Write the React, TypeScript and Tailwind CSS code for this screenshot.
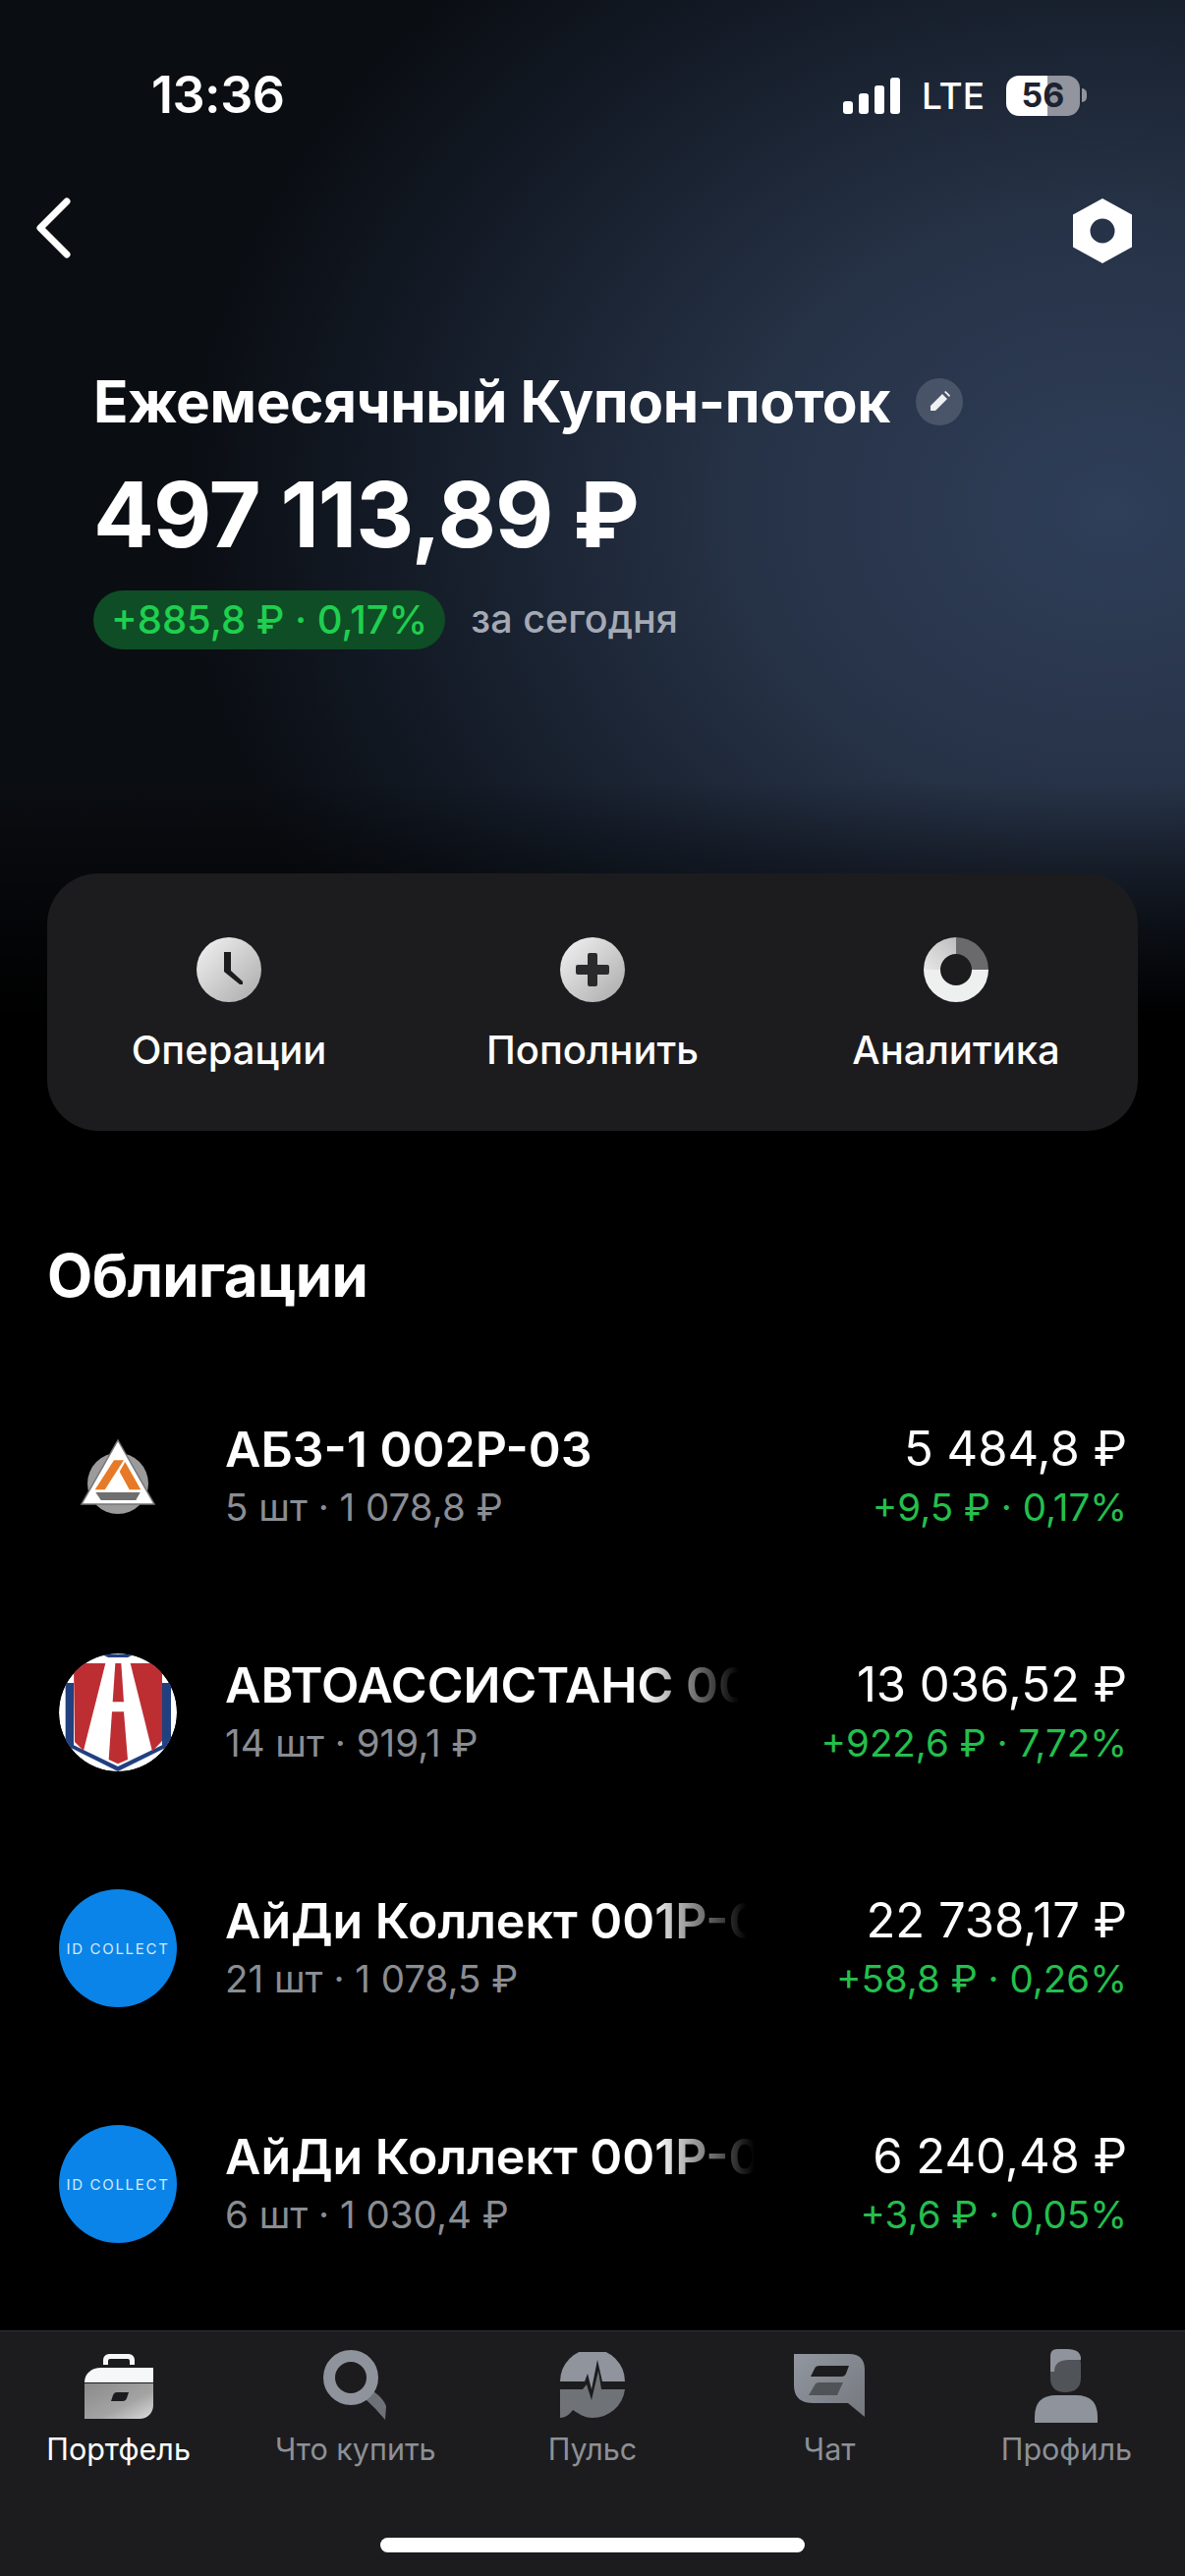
import type { ReactNode } from "react"

const font = { fontFamily: "Inter, 'Noto Sans', sans-serif" }

function StatusBar() {
    return (
        <div className="flex h-[72px] items-center justify-between pl-[154px] pr-[100px] text-white">
            <span className="text-[52px] font-semibold leading-none tracking-[-0.5px]">13:36</span>
            <div className="flex items-center">
                <div className="flex items-end gap-[6px]">
                    <div className="h-[13px] w-[10px] rounded-[3px] bg-white" />
                    <div className="h-[21px] w-[10px] rounded-[3px] bg-white" />
                    <div className="h-[29px] w-[10px] rounded-[3px] bg-white" />
                    <div className="h-[37px] w-[10px] rounded-[3px] bg-white" />
                </div>
                <span className="ml-[22px] text-[37px] font-medium leading-none">LTE</span>
                <div className="ml-[22px] flex h-[41px] w-[75px] items-center justify-center rounded-[13px] bg-[linear-gradient(90deg,#fff_56%,#92959d_56%)] text-[34px] font-bold leading-none text-[#1c2230]">
                    56
                </div>
                <div className="ml-[2px] h-[14px] w-[5px] rounded-r-full bg-[#92959d]" />
            </div>
        </div>
    )
}

function ClockIcon() {
    return (
        <svg width="66" height="66" viewBox="0 0 66 66">
            <defs>
                <linearGradient id="clockFill" x1="0" y1="0" x2="1" y2="1">
                    <stop offset="0" stopColor="#f4f4f4" />
                    <stop offset="1" stopColor="#a9a9a9" />
                </linearGradient>
            </defs>
            <circle cx="33" cy="33" r="33" fill="url(#clockFill)" />
            <path d="M28 15h7v19l12 11v3l-3 0-16-13z" fill="#1c1c1e" />
        </svg>
    )
}

function PlusIcon() {
    return (
        <svg width="66" height="66" viewBox="0 0 66 66">
            <defs>
                <linearGradient id="plusFill" x1="0" y1="0" x2="1" y2="1">
                    <stop offset="0" stopColor="#f4f4f4" />
                    <stop offset="1" stopColor="#a9a9a9" />
                </linearGradient>
            </defs>
            <circle cx="33" cy="33" r="33" fill="url(#plusFill)" />
            <path d="M28 18a2 2 0 0 1 2-2h6a2 2 0 0 1 2 2v10h10a2 2 0 0 1 2 2v6a2 2 0 0 1-2 2H38v10a2 2 0 0 1-2 2h-6a2 2 0 0 1-2-2V38H18a2 2 0 0 1-2-2v-6a2 2 0 0 1 2-2h10z" fill="#2a2a2c" />
        </svg>
    )
}

function DonutIcon() {
    return (
        <svg width="66" height="66" viewBox="0 0 66 66">
            <defs>
                <linearGradient id="donutFill" x1="0" y1="1" x2="1" y2="0">
                    <stop offset="0" stopColor="#e8e8e8" />
                    <stop offset="1" stopColor="#bdbdbd" />
                </linearGradient>
            </defs>
            <path d="M0 33a33 33 0 0 1 33-33v17a16 16 0 0 0-16 16z" fill="url(#donutFill)" />
            <path d="M33 0a33 33 0 0 1 33 33H49a16 16 0 0 0-16-16z" fill="#6a6a6c" />
            <path d="M0 33h17a16 16 0 0 0 32 0h17a33 33 0 0 1-66 0z" fill="#eef0f0" />
        </svg>
    )
}

function BriefcaseIcon() {
    return (
        <svg width="72" height="68" viewBox="0 0 72 68">
            <defs>
                <linearGradient id="caseFill" x1="0" y1="0" x2="1" y2="1">
                    <stop offset="0" stopColor="#8a8a8a" />
                    <stop offset="0.6" stopColor="#a4a4a4" />
                    <stop offset="1" stopColor="#dcdcdc" />
                </linearGradient>
            </defs>
            <path d="M20 13V8a6 6 0 0 1 6-6h20a6 6 0 0 1 6 6v5h-5V9a2 2 0 0 0-2-2H27a2 2 0 0 0-2 2v4z" fill="#f6f7f8" />
            <path d="M1 31C1 22 8 16 18 16h53v15z" fill="#f6f7f8" />
            <path d="M1 32h70v22c0 8-6 14-14 14H1z" fill="url(#caseFill)" />
            <path d="M30 44q1-3 4-3h12l-2 6q-1 3-4 3H28z" fill="#1c1c1e" />
        </svg>
    )
}

function SearchIcon() {
    return (
        <svg width="66" height="72" viewBox="0 0 66 72">
            <path d="M43 50l8-8q10 7 13 15l-1 14q-10-12-20-21z" fill="#6e7278" />
            <circle cx="28" cy="28" r="22" fill="none" stroke="#8f939c" strokeWidth="12" />
        </svg>
    )
}

function PulseIcon() {
    return (
        <svg width="68" height="68" viewBox="0 0 68 68">
            <path d="M1 30a33 33 0 0 1 66 0H44l-5-22-6 30-4-16-3 8z" fill="#90949d" />
            <path d="M1 38h23l4-5 5 16 7-30 3 19h24a33 33 0 0 1-33 29c-9 0-15-5-20-8-3 4-7 8-13 8z" fill="#6f7277" />
        </svg>
    )
}

function ChatIcon() {
    return (
        <svg width="72" height="66" viewBox="0 0 72 66">
            <defs>
                <linearGradient id="chatFill" x1="0" y1="0" x2="1" y2="1">
                    <stop offset="0" stopColor="#9297a0" />
                    <stop offset="1" stopColor="#74777d" />
                </linearGradient>
            </defs>
            <path d="M0 1h56q16 0 16 16v48L55 51H20Q0 51 0 33z" fill="url(#chatFill)" />
            <path d="M21 16q1-3 5-3h30l-3 8q-1 3-5 3H17z" fill="#1c1c1e" />
            <path d="M21 33q1-3 5-3h24l-6 13H15z" fill="#505358" />
        </svg>
    )
}

function ProfileIcon() {
    return (
        <svg width="64" height="76" viewBox="0 0 64 76">
            <path d="M16 16q0-15 15-15 16 0 16 15v14q0 15-16 15-15 0-15-15z" fill="#505358" />
            <path d="M16 24V8q0-7 7-7h10q14 0 14 10v1q-2 0-12 0-15 0-15 12z" fill="#8f939c" />
            <path d="M0 76V70q0-22 22-22h20q22 0 22 22v6z" fill="#8f939c" />
        </svg>
    )
}

function AbzLogo() {
    return (
        <svg width="120" height="120" viewBox="0 0 120 120">
            <circle cx="60" cy="67" r="31" fill="#9b9b9b" />
            <path d="M60 23l37 65H23z" fill="#fff" stroke="#777" strokeWidth="1.5" />
            <path d="M36.7 73.3L56 43.3h10L46.7 73.3z" fill="#e67a26" />
            <path d="M67.3 45l16 28.3H71.7L61.7 55z" fill="#e67a26" />
            <path d="M37.3 76h45.4l-4.4 8H42.7z" fill="#6f6f6f" />
        </svg>
    )
}

function AutoLogo() {
    return (
        <svg width="120" height="120" viewBox="0 0 360 360" className="rounded-full">
            <circle cx="180" cy="180" r="180" fill="#fff" />
            <path d="M20 90h25v190l135 65 135-65V90h27v190L180 360 20 280z" fill="#21407f" />
            <path d="M130 2h100l-20 10h-60z" fill="#21407f" />
            <path d="M45 30h97L75 297 48 270z" fill="#bd2e33" />
            <path d="M218 30h97v237l-30 32z" fill="#bd2e33" />
            <path d="M172 30h18l8 118h-34z" fill="#bd2e33" />
            <path d="M162 178h36l12 146-30 13-28-13z" fill="#bd2e33" />
        </svg>
    )
}

function IdCollectLogo() {
    return (
        <div className="flex size-[120px] items-center justify-center rounded-full bg-[#0a84e8] text-[15px] leading-none tracking-[1.7px] text-[#d5e9fb]">
            ID COLLECT
        </div>
    )
}

const bonds: { logo: ReactNode; name: string; nameWidth: string; sub: string; total: string; change: string }[] = [
    { logo: <AbzLogo />, name: "АБЗ-1 002Р-03", nameWidth: "w-[523px]", sub: "5 шт · 1 078,8 ₽", total: "5 484,8 ₽", change: "+9,5 ₽ · 0,17%" },
    { logo: <AutoLogo />, name: "АВТОАССИСТАНС 001Р-01", nameWidth: "w-[523px]", sub: "14 шт · 919,1 ₽", total: "13 036,52 ₽", change: "+922,6 ₽ · 7,72%" },
    { logo: <IdCollectLogo />, name: "АйДи Коллект 001Р-04", nameWidth: "w-[531px]", sub: "21 шт · 1 078,5 ₽", total: "22 738,17 ₽", change: "+58,8 ₽ · 0,26%" },
    { logo: <IdCollectLogo />, name: "АйДи Коллект 001Р-03", nameWidth: "w-[539px]", sub: "6 шт · 1 030,4 ₽", total: "6 240,48 ₽", change: "+3,6 ₽ · 0,05%" },
]

const actions = [
    { icon: <ClockIcon />, label: "Операции" },
    { icon: <PlusIcon />, label: "Пополнить" },
    { icon: <DonutIcon />, label: "Аналитика" },
]

const tabs = [
    { icon: <BriefcaseIcon />, label: "Портфель", active: true },
    { icon: <SearchIcon />, label: "Что купить", active: false },
    { icon: <PulseIcon />, label: "Пульс", active: false },
    { icon: <ChatIcon />, label: "Чат", active: false },
    { icon: <ProfileIcon />, label: "Профиль", active: false },
]

export default function App() {
    return (
        <div className="flex h-[2622px] w-[1206px] flex-col overflow-hidden bg-black text-white" style={font}>
            <section className="h-[1060px] shrink-0 bg-[image:linear-gradient(180deg,transparent_75%,#000_98%),radial-gradient(ellipse_950px_760px_at_1130px_520px,#2f3e59_0%,#263246_40%,#161e2b_72%,#0a0d12_100%)] pt-[61px]">
                <StatusBar />

                <div className="mt-[69px] flex items-center justify-between pl-[36px] pr-[54px]">
                    <svg width="36" height="62" viewBox="0 0 36 62" fill="none" className="-mt-[6px]">
                        <path d="M32 4L5 31l27 27" stroke="#fff" strokeWidth="7" strokeLinecap="round" strokeLinejoin="round" />
                    </svg>
                    <svg width="60" height="66" viewBox="0 0 60 66">
                        <path fillRule="evenodd" d="M30 0l30 16.5v33L30 66 0 49.5v-33zM30 20.500a12.500 12.500 0 1 0 0 25 12.500 12.500 0 0 0 0-25z" fill="#fff" />
                    </svg>
                </div>

                <div className="mt-[107px] pl-[95px]">
                    <div className="flex items-center">
                        <h1 className="text-[58.500px] font-bold leading-[68px] tracking-[-0.4px]">Ежемесячный Купон-поток</h1>
                        <div className="ml-[26px] flex size-[48px] items-center justify-center rounded-full bg-white/15">
                            <svg width="24" height="24" viewBox="0 0 24 24">
                                <path d="M3 21v-5L15 4l5 5L8 21zM17 2l1.500-1 4.500 4.500-1 1.500z" fill="#eef0f3" />
                            </svg>
                        </div>
                    </div>
                    <div className="mt-[31px] text-[91.500px] font-bold leading-[100px] tracking-[-1px]">497 113,89 ₽</div>
                    <div className="mt-[27px] flex items-center">
                        <span className="flex h-[60px] items-center rounded-full bg-[#0e4d25] px-[18px] text-[40px] font-medium leading-none text-[#1fcf4f]">
                            +885,8 ₽ · 0,17%
                        </span>
                        <span className="ml-[26px] text-[39.500px] font-medium leading-none text-[#a4aab5]">за сегодня</span>
                    </div>
                </div>

                <div className="mx-[48px] mt-[228px] grid h-[262px] grid-cols-3 rounded-[52px] bg-[#1c1c1e] pt-[65px]">
                    {actions.map((action) => (
                        <div key={action.label} className="flex flex-col items-center">
                            {action.icon}
                            <span className="mt-[25px] text-[40px] font-medium leading-[48px]">{action.label}</span>
                        </div>
                    ))}
                </div>
            </section>

            <h2 className="mt-[204px] h-[68px] shrink-0 pl-[48px] text-[60px] font-bold leading-[68px] tracking-[-0.6px]">Облигации</h2>

            <div className="mt-[51px] min-h-0 flex-1 overflow-hidden">
                {bonds.map((bond) => (
                    <div key={bond.total} className="flex h-[240px] items-center pl-[60px] pr-[59px]">
                        <div className="size-[120px] shrink-0">{bond.logo}</div>
                        <div className="ml-[49px] min-w-0 flex-1 overflow-hidden">
                            <div className={`${bond.nameWidth} overflow-hidden whitespace-nowrap text-[50px] font-semibold leading-[62px] [mask-image:linear-gradient(90deg,#000_calc(100%-100px),transparent)]`}>
                                {bond.name}
                            </div>
                            <div className="text-[38.500px] leading-[56px] text-[#8a8d93]">{bond.sub}</div>
                        </div>
                        <div className="shrink-0 text-right">
                            <div className="text-[49px] leading-[62px]">{bond.total}</div>
                            <div className="text-[38.500px] leading-[56px] text-[#24bf4c]">{bond.change}</div>
                        </div>
                    </div>
                ))}
            </div>

            <nav className="relative h-[250px] shrink-0 border-t border-[#333336] bg-[#1c1c1e]">
                <div className="grid grid-cols-5 pt-[15px]">
                    {tabs.map((tab) => (
                        <div key={tab.label} className="flex flex-col items-center">
                            <div className="flex h-[80px] items-center justify-center">{tab.icon}</div>
                            <span className={`mt-[7px] text-[30.500px] leading-[36px] ${tab.active ? "text-white" : "text-[#8d9096]"}`}>{tab.label}</span>
                        </div>
                    ))}
                </div>
                <div className="absolute bottom-[24px] left-[387px] h-[15px] w-[432px] rounded-full bg-white" />
            </nav>
        </div>
    )
}
